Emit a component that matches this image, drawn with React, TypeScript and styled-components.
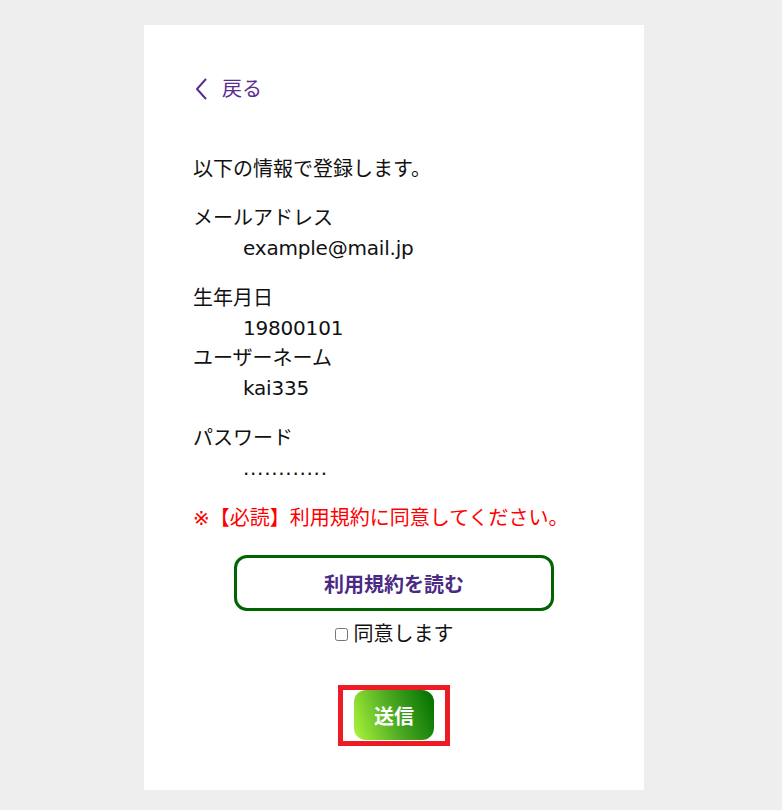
import React from "react";
import styled, { createGlobalStyle } from "styled-components";

const GlobalStyle = createGlobalStyle`
  html, body {
    margin: 0;
    padding: 0;
    background: #eeeeee;
  }
  body {
    font-family: "DejaVu Sans", "Noto Sans CJK JP", sans-serif;
    color: #111;
  }
`;

const Page = styled.div`
  padding: 25px 0 20px 144px;
`;

const Card = styled.main`
  width: 500px;
  box-sizing: border-box;
  background: #ffffff;
  padding: 49px 49px 44px 49px;
  font-size: 20px;
  line-height: 30px;
`;

const BackLink = styled.a`
  display: flex;
  align-items: center;
  gap: 15px;
  color: #5c2d91;
  text-decoration: none;
  font-size: 20px;
  line-height: 30px;
  cursor: pointer;
  padding-left: 2px;
`;

const Intro = styled.p`
  margin: 50px 0 19px;
`;

const InfoList = styled.dl`
  margin: 0;
`;

const Group = styled.div<{ $gap?: number }>`
  margin-bottom: ${(p) => (p.$gap ?? 20)}px;
`;

const Label = styled.dt`
  margin: 0;
`;

const Value = styled.dd<{ $spacing?: number }>`
  margin: 0 0 0 50px;
  letter-spacing: ${(p) => (p.$spacing ?? -0.2)}px;
`;

const Notice = styled.p`
  margin: 0;
  color: #ff0000;
`;

const Actions = styled.div`
  display: flex;
  flex-direction: column;
  align-items: center;
`;

const TermsButton = styled.button`
  margin-top: 22px;
  width: 320px;
  height: 56px;
  box-sizing: border-box;
  border: 3px solid #006400;
  border-radius: 13px;
  background: #ffffff;
  color: #4b2a84;
  font-family: "DejaVu Sans", "Noto Sans CJK JP", sans-serif;
  font-size: 20px;
  font-weight: 700;
  cursor: pointer;
`;

const AgreeLabel = styled.label`
  margin-top: 8px;
  display: flex;
  align-items: center;
  line-height: 30px;
  font-size: 20px;
  color: #111;
`;

const Check = styled.input`
  width: 13px;
  height: 13px;
  margin: 1px 6px 0 0;
`;

const SubmitFrame = styled.div`
  margin-top: 36px;
  border: 5px solid #ed1c24;
  padding: 0 11px 0 11px;
  height: 51px;
  box-sizing: content-box;
  display: flex;
  align-items: flex-start;
`;

const SubmitButton = styled.button`
  width: 80px;
  height: 50px;
  border: none;
  border-radius: 12px;
  background: linear-gradient(70deg, #adf53a 0%, #4caa22 50%, #006d00 100%);
  color: #ffffff;
  font-family: "DejaVu Sans", "Noto Sans CJK JP", sans-serif;
  font-size: 20px;
  font-weight: 700;
  cursor: pointer;
`;

const Chevron = () => (
  <svg width="12" height="22" viewBox="0 0 12 22" fill="none">
    <polyline
      points="10.5,1.5 2,11 10.5,20.5"
      stroke="#5c2d91"
      strokeWidth="2"
      strokeLinecap="round"
      strokeLinejoin="round"
    />
  </svg>
);

export default function App() {
  return (
    <>
      <GlobalStyle />
      <Page>
        <Card>
          <BackLink>
            <Chevron />
            <span>戻る</span>
          </BackLink>
          <Intro>以下の情報で登録します。</Intro>
          <InfoList>
            <Group>
              <Label>メールアドレス</Label>
              <Value>example@mail.jp</Value>
            </Group>
            <Group $gap={0}>
              <Label>生年月日</Label>
              <Value>19800101</Value>
            </Group>
            <Group>
              <Label>ユーザーネーム</Label>
              <Value>kai335</Value>
            </Group>
            <Group>
              <Label>パスワード</Label>
              <Value $spacing={0.7}>............</Value>
            </Group>
          </InfoList>
          <Notice>※【必読】利用規約に同意してください。</Notice>
          <Actions>
            <TermsButton type="button">利用規約を読む</TermsButton>
            <AgreeLabel>
              <Check type="checkbox" />
              同意します
            </AgreeLabel>
            <SubmitFrame>
              <SubmitButton type="button">送信</SubmitButton>
            </SubmitFrame>
          </Actions>
        </Card>
      </Page>
    </>
  );
}
